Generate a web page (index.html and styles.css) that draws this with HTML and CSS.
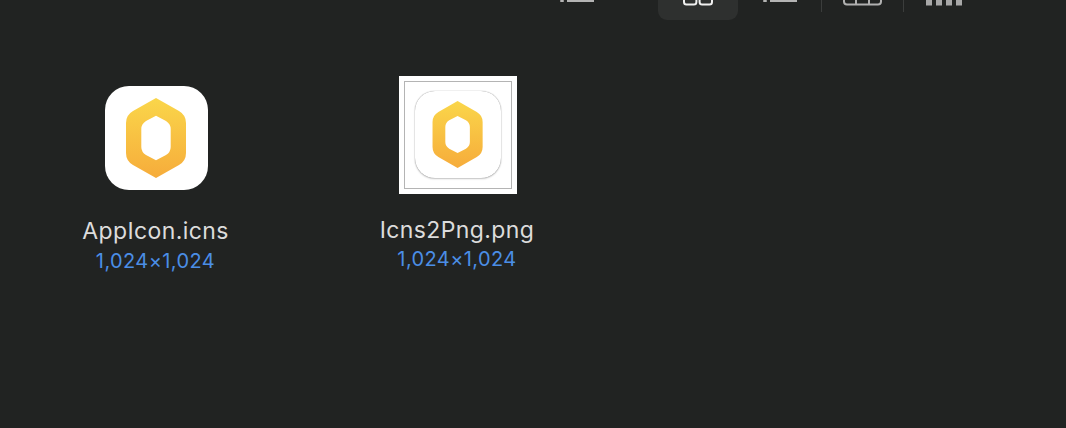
FILE: index.html
```html
<!DOCTYPE html>
<html lang="en">
<head>
    <meta charset="UTF-8">
    <title>Finder</title>
    <link rel="stylesheet" href="styles.css">
</head>
<body>
    <div class="toolbar">
        <svg class="tool tool-list" width="34" height="3" viewBox="0 0 34 3">
            <rect x="0" y="0" width="4" height="2" rx="1" fill="#b4b4b4"/>
            <rect x="7" y="-2" width="27" height="4" fill="#b4b4b4"/>
        </svg>
        <div class="tool-active">
            <svg width="30" height="6" viewBox="0 0 30 6" fill="none" stroke="#f0f0f0" stroke-width="2">
                <rect x="1" y="-8" width="12.4" height="12.4" rx="2.5"/>
                <rect x="16.6" y="-8" width="12.4" height="12.4" rx="2.5"/>
            </svg>
        </div>
        <svg class="tool tool-list2" width="34" height="3" viewBox="0 0 34 3">
            <rect x="0" y="0" width="4" height="2" rx="1" fill="#b4b4b4"/>
            <rect x="7" y="-2" width="27" height="4" fill="#b4b4b4"/>
        </svg>
        <span class="divider divider-first"></span>
        <svg class="tool tool-gallery" width="39" height="6" viewBox="0 0 39 6" fill="none" stroke="#b0b0b0" stroke-width="2">
            <rect x="1" y="-8" width="37" height="12.6" rx="3"/>
            <path d="M13 -2V4.6M26 -2V4.6"/>
        </svg>
        <span class="divider divider-second"></span>
        <svg class="tool tool-columns" width="36" height="6" viewBox="0 0 36 6" fill="#a8a8a8">
            <rect x="0" y="0" width="6" height="5.5"/>
            <rect x="10" y="0" width="6" height="5.5"/>
            <rect x="20" y="0" width="6" height="5.5"/>
            <rect x="30" y="0" width="6" height="5.5"/>
        </svg>
    </div>

    <div class="files">
        <div class="file file-icns">
            <div class="app-tile">
                <svg width="103" height="104" viewBox="0 0 103 104">
                    <defs>
                        <linearGradient id="honey1" x1="0" y1="0" x2="0" y2="1">
                            <stop offset="0" stop-color="#fad64a"/>
                            <stop offset="1" stop-color="#f6ac3b"/>
                        </linearGradient>
                    </defs>
                    <path fill="url(#honey1)" fill-rule="evenodd" d="M51 12 L28 25 Q21 29 21 37 V67 Q21 75 28 79 L51 92 L74 79 Q81 75 81 67 V37 Q81 29 74 25 Z M51 29.7 L61 35 Q65.7 38 65.7 43 V61 Q65.7 66 61 69 L51 74.3 L41 69 Q36.3 66 36.3 61 V43 Q36.3 38 41 35 Z"/>
                </svg>
            </div>
            <div class="file-name">AppIcon.icns</div>
            <div class="file-size">1,024×1,024</div>
        </div>
        <div class="file file-png">
            <div class="thumb">
                <div class="thumb-frame">
                    <div class="thumb-tile">
                        <svg width="86" height="87" viewBox="0 0 103 104">
                            <defs>
                                <linearGradient id="honey2" x1="0" y1="0" x2="0" y2="1">
                                    <stop offset="0" stop-color="#fad64a"/>
                                    <stop offset="1" stop-color="#f6ac3b"/>
                                </linearGradient>
                            </defs>
                            <path fill="url(#honey2)" fill-rule="evenodd" d="M51 12 L28 25 Q21 29 21 37 V67 Q21 75 28 79 L51 92 L74 79 Q81 75 81 67 V37 Q81 29 74 25 Z M51 29.7 L61 35 Q65.7 38 65.7 43 V61 Q65.7 66 61 69 L51 74.3 L41 69 Q36.3 66 36.3 61 V43 Q36.3 38 41 35 Z"/>
                        </svg>
                    </div>
                </div>
            </div>
            <div class="file-name">Icns2Png.png</div>
            <div class="file-size">1,024×1,024</div>
        </div>
    </div>
</body>
</html>
```

FILE: styles.css
```css
html, body {
    height: 100%;
}
body {
    margin: 0;
    background-color: #212322;
    font-family: Inter, "Noto Sans", sans-serif;
    overflow: hidden;
}
.toolbar {
    display: flex;
    align-items: flex-start;
    height: 20px;
    padding-left: 560px;
}
.tool {
    display: block;
    flex: none;
}
.tool-active {
    display: flex;
    justify-content: center;
    width: 80px;
    height: 20px;
    margin-left: 64px;
    background-color: #2e302f;
    border-radius: 0 0 9px 9px;
}
.tool-list2 {
    margin-left: 25px;
}
.divider {
    flex: none;
    width: 1px;
    height: 12px;
    background-color: #3b3d3c;
}
.divider-first {
    margin-left: 24px;
}
.tool-gallery {
    margin-left: 21px;
}
.divider-second {
    margin-left: 21px;
}
.tool-columns {
    margin-left: 22px;
}
.files {
    display: grid;
    grid-template-columns: 301px 302px;
    align-items: start;
    padding: 56px 0 0 6px;
}
.file {
    display: flex;
    flex-direction: column;
    align-items: center;
}
.file-icns {
    padding-top: 10px;
}
.app-tile {
    width: 103px;
    height: 104px;
    background-color: #fff;
    border-radius: 24px;
}
.app-tile svg, .thumb-tile svg {
    display: block;
}
.thumb {
    box-sizing: border-box;
    width: 118px;
    height: 118px;
    padding: 5px;
    background-color: #fff;
}
.thumb-frame {
    box-sizing: border-box;
    height: 108px;
    padding: 9px 0 0 10px;
    border: 1px solid #b4b4b4;
}
.thumb-tile {
    width: 86px;
    height: 87px;
    background-color: #fff;
    border-radius: 20px;
    box-shadow: 0 0 1px rgba(0, 0, 0, 0.5), 0 1px 2px rgba(0, 0, 0, 0.2);
}
.file-name {
    margin-top: 27px;
    padding-right: 2px;
    color: #dcdcdc;
    font-size: 23px;
    line-height: 28px;
    letter-spacing: 0.4px;
    white-space: nowrap;
}
.file-png .file-name {
    margin-top: 22px;
}
.file-size {
    margin-top: 4px;
    padding-right: 2px;
    color: #4b8ee6;
    font-size: 20px;
    line-height: 24px;
    letter-spacing: 0.4px;
    white-space: nowrap;
}
.file-png .file-size {
    margin-top: 3px;
}
```
